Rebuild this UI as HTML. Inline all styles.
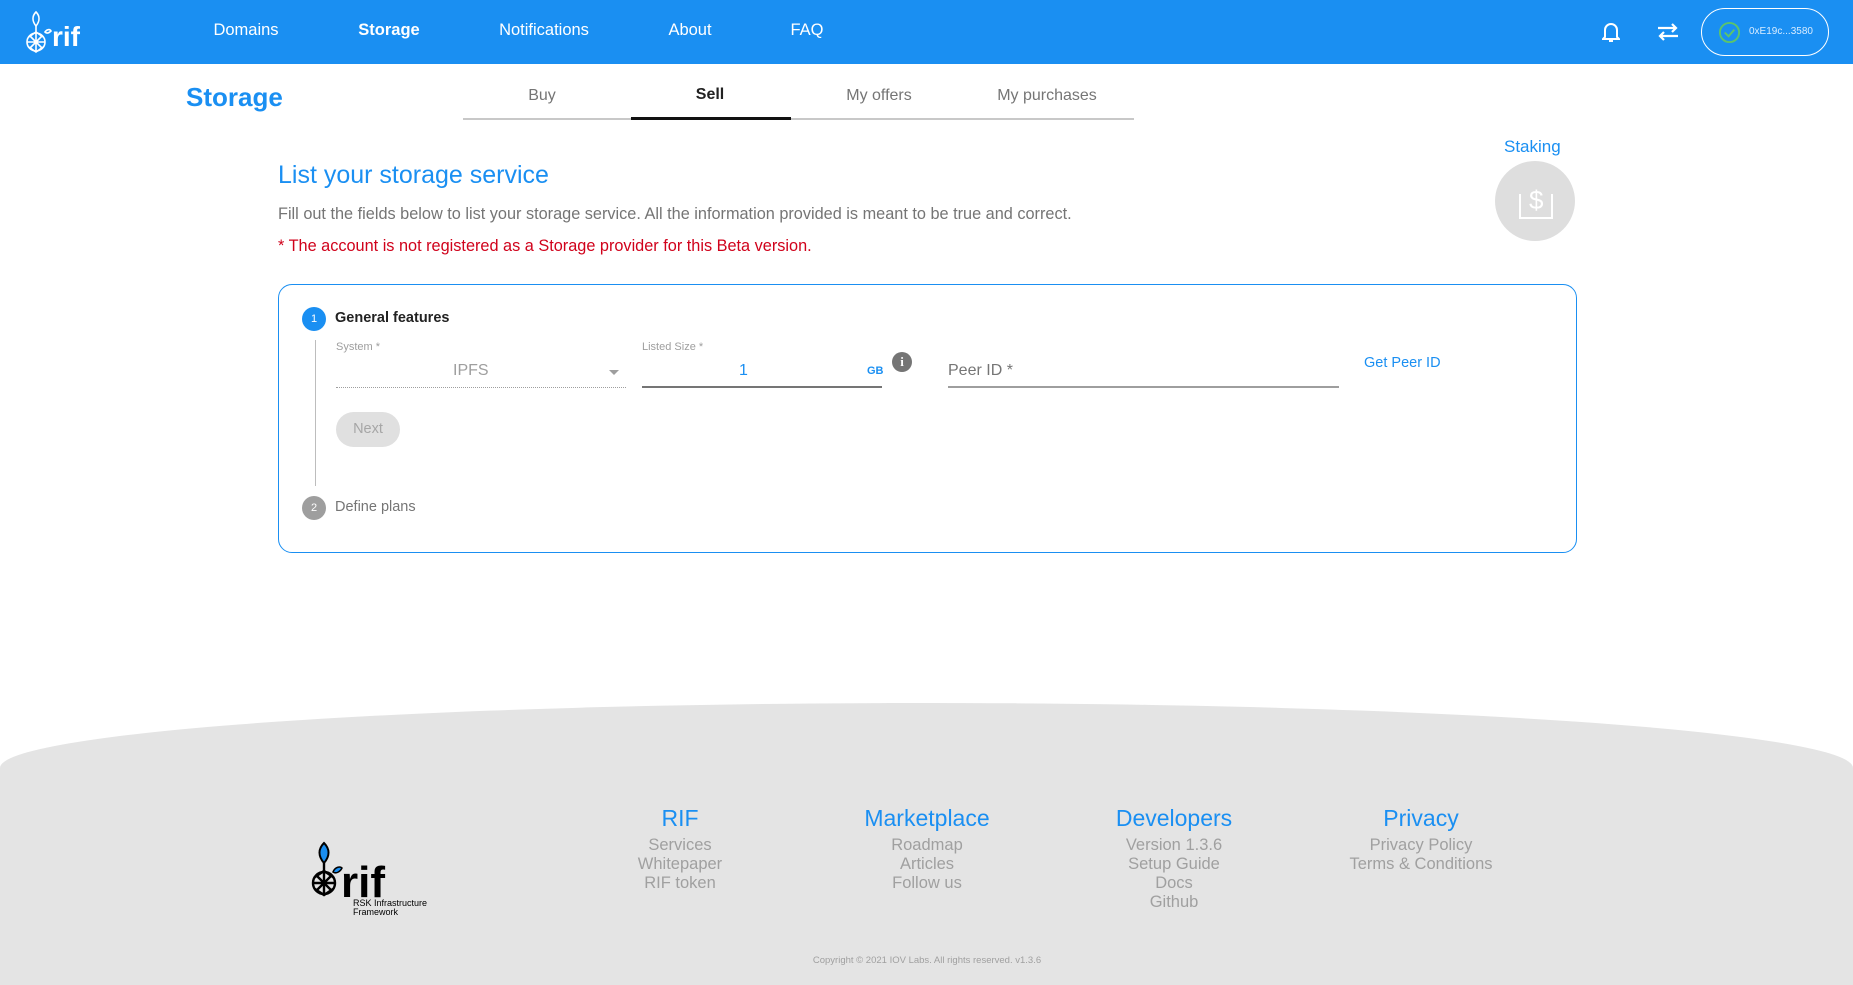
<!DOCTYPE html>
<html><head><meta charset="utf-8"><style>
*{margin:0;padding:0;box-sizing:border-box}
body{width:1853px;height:985px;overflow:hidden;background:#fff;font-family:"Liberation Sans",sans-serif;position:relative}
.a{position:absolute;white-space:nowrap}
.nav{position:absolute;left:0;top:0;width:1853px;height:64px;background:#1a8ff2}
.nav .n{color:#fff;font-size:16.5px;top:21px;transform:translateX(-50%)}
.tab{top:87px;font-size:16px;color:#757575;transform:translateX(-50%)}
.lbl{font-size:11px;color:#9e9e9e}
.foot{position:absolute;left:0;top:703px;width:1853px;height:282px;background:#e4e4e4;border-radius:927px 927px 0 0/65px 65px 0 0}
.fc{position:absolute;transform:translateX(-50%);text-align:center;top:805px}
.fc h3{font-weight:normal;color:#1a8ff2;font-size:23px;margin-bottom:4px}
.fc div{color:#a0a0a0;font-size:16.5px;line-height:19px}
</style></head><body>
<div class="nav">
 <svg class="a" style="left:24px;top:10px" width="62" height="44" viewBox="0 0 62 44" fill="none" stroke="#fff" stroke-width="1.6">
  <path d="M12 2c-4 4-4 9 0 14c4-5 4-10 0-14z"/><line x1="12" y1="16" x2="12" y2="22"/>
  <circle cx="12" cy="32" r="9"/><path d="M5 27l7-5 7 5M5 37l7 5 7-5M12 22v20M3 32h18M6 26l12 12M18 26L6 38"/>
  <path d="M21 22c2-3 5-3 6-1-2 2-4 3-6 1z"/>
  <text x="28" y="36" fill="#fff" stroke="none" font-family="Liberation Sans" font-weight="bold" font-size="28">rif</text>
 </svg>
 <div class="a n" style="left:246px">Domains</div>
 <div class="a n" style="left:389px;font-weight:bold">Storage</div>
 <div class="a n" style="left:544px">Notifications</div>
 <div class="a n" style="left:690px">About</div>
 <div class="a n" style="left:807px">FAQ</div>
 <svg class="a" style="left:1602px;top:21px" width="18" height="22" viewBox="0 0 18 22" fill="none" stroke="#fff" stroke-width="2"><path d="M3 16V9a6 6 0 0 1 12 0v7l2 2H1z"/><path d="M7 20h4"/></svg>
 <svg class="a" style="left:1657px;top:22px" width="22" height="20" viewBox="0 0 22 20" fill="none" stroke="#fff" stroke-width="2.2"><path d="M1 6h18M15 2l4 4-4 4M21 14H3M7 10l-4 4 4 4"/></svg>
 <div class="a" style="left:1701px;top:8px;width:128px;height:48px;border:1.5px solid #fff;border-radius:24px"></div>
 <svg class="a" style="left:1718px;top:21px" width="23" height="23" viewBox="0 0 24 24" fill="none" stroke="#5bc46c" stroke-width="2"><circle cx="12" cy="12" r="10"/><path d="M7 12l4 4 6-7"/></svg>
 <div class="a" style="left:1749px;top:26px;font-size:10px;color:#d8ecff">0xE19c...3580</div>
</div>
<div class="a" style="left:186px;top:82px;font-size:26px;font-weight:bold;color:#1a8ff2">Storage</div>
<div class="a" style="left:463px;top:118px;width:671px;height:2px;background:#c8c8c8"></div>
<div class="a" style="left:631px;top:117px;width:160px;height:3px;background:#111"></div>
<div class="a tab" style="left:542px">Buy</div>
<div class="a tab" style="left:710px;color:#222;font-weight:bold;top:86px">Sell</div>
<div class="a tab" style="left:879px">My offers</div>
<div class="a tab" style="left:1047px">My purchases</div>
<div class="a" style="left:1504px;top:137px;font-size:17px;color:#1a8ff2">Staking</div>
<div class="a" style="left:1495px;top:161px;width:80px;height:80px;border-radius:50%;background:#dedede"></div>
<svg class="a" style="left:1518px;top:182px" width="36" height="38" viewBox="0 0 36 38" fill="none" stroke="#fff" stroke-width="2"><path d="M2 12v24h32V12"/><text x="11" y="27" fill="#fff" stroke="none" font-size="26" font-family="Liberation Sans">$</text></svg>
<div class="a" style="left:278px;top:161px;font-size:25px;color:#1a8ff2">List your storage service</div>
<div class="a" style="left:278px;top:205px;font-size:16.3px;color:#757575">Fill out the fields below to list your storage service. All the information provided is meant to be true and correct.</div>
<div class="a" style="left:278px;top:237px;font-size:16.3px;color:#d0021b">* The account is not registered as a Storage provider for this Beta version.</div>
<div class="a" style="left:278px;top:284px;width:1299px;height:269px;border:1px solid #1a8ff2;border-radius:14px"></div>
<div class="a" style="left:302px;top:307px;width:24px;height:24px;border-radius:50%;background:#1a8ff2;color:#fff;font-size:11px;text-align:center;line-height:24px">1</div>
<div class="a" style="left:335px;top:310px;font-size:14.5px;font-weight:bold;color:#222">General features</div>
<div class="a" style="left:315px;top:340px;width:1px;height:146px;background:#bdbdbd"></div>
<div class="a lbl" style="left:336px;top:341px">System *</div>
<div class="a" style="left:453px;top:362px;font-size:16px;color:#9e9e9e">IPFS</div>
<div class="a" style="left:609px;top:370px;border:5px solid transparent;border-top-color:#9e9e9e;border-bottom:0"></div>
<div class="a" style="left:336px;top:387px;width:290px;border-top:1px dotted #9e9e9e"></div>
<div class="a lbl" style="left:642px;top:341px">Listed Size *</div>
<div class="a" style="left:739px;top:362px;font-size:16px;color:#1a8ff2">1</div>
<div class="a" style="left:867px;top:365px;font-size:11px;font-weight:bold;color:#1a8ff2">GB</div>
<div class="a" style="left:642px;top:386px;width:240px;height:2px;background:#757575"></div>
<div class="a" style="left:892px;top:352px;width:20px;height:20px;border-radius:50%;background:#757575;color:#fff;font-size:13px;font-weight:bold;text-align:center;line-height:20px;font-family:'Liberation Serif',serif">i</div>
<div class="a" style="left:948px;top:362px;font-size:16px;color:#757575">Peer ID *</div>
<div class="a" style="left:948px;top:386px;width:391px;height:2px;background:#9e9e9e"></div>
<div class="a" style="left:1364px;top:355px;font-size:14.5px;color:#1a8ff2">Get Peer ID</div>
<div class="a" style="left:336px;top:412px;width:64px;height:35px;border-radius:18px;background:#e0e0e0;color:#a6a6a6;font-size:14.5px;text-align:center;line-height:35px">Next</div>
<div class="a" style="left:302px;top:496px;width:24px;height:24px;border-radius:50%;background:#9e9e9e;color:#fff;font-size:11px;text-align:center;line-height:24px">2</div>
<div class="a" style="left:335px;top:499px;font-size:14.5px;color:#757575">Define plans</div>
<div class="foot"></div>
<svg class="a" style="left:305px;top:840px" width="135" height="76" viewBox="0 0 135 76">
 <path d="M19 3c-6 6-6 13 0 20c6-7 6-14 0-20z" fill="#1a8ff2" stroke="#000" stroke-width="2"/>
 <g fill="none" stroke="#000" stroke-width="2.4"><line x1="19" y1="23" x2="19" y2="31"/><circle cx="19" cy="43" r="11"/><path d="M10 37l9-6 9 6M10 49l9 6 9-6M19 31v24M8 43h22M11 35l16 16M27 35L11 51"/></g>
 <path d="M28 32c2-5 7-6 9-4-2 4-6 6-9 4z" fill="#1a8ff2" stroke="#000" stroke-width="1.5"/>
 <text x="36" y="57" font-family="Liberation Sans" font-weight="bold" font-size="44" fill="#000">rif</text>
 <text x="48" y="66" font-family="Liberation Sans" font-size="9" fill="#000">RSK Infrastructure</text>
 <text x="48" y="75" font-family="Liberation Sans" font-size="9" fill="#000">Framework</text>
</svg>
<div class="fc" style="left:680px"><h3>RIF</h3><div>Services<br>Whitepaper<br>RIF token</div></div>
<div class="fc" style="left:927px"><h3>Marketplace</h3><div>Roadmap<br>Articles<br>Follow us</div></div>
<div class="fc" style="left:1174px"><h3>Developers</h3><div>Version 1.3.6<br>Setup Guide<br>Docs<br>Github</div></div>
<div class="fc" style="left:1421px"><h3>Privacy</h3><div>Privacy Policy<br>Terms &amp; Conditions</div></div>
<div class="a" style="left:927px;top:955px;transform:translateX(-50%);font-size:9.5px;color:#a0a0a0">Copyright © 2021 IOV Labs. All rights reserved. v1.3.6</div>
</body></html>
